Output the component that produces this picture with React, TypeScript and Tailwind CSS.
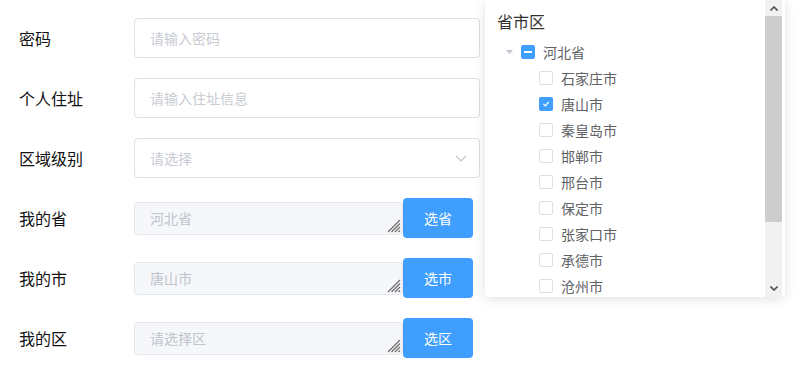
import React from "react";

const FONT = { fontFamily: '"Noto Sans CJK SC", "Noto Sans", sans-serif' };

function Hatch() {
  return (
    <svg className="absolute right-[1px] bottom-[1px]" width="14" height="14" viewBox="0 0 14 14">
      <g stroke="#6e6e6e" strokeWidth="1.3">
        <line x1="13" y1="1" x2="1" y2="13" />
        <line x1="13" y1="4.5" x2="4.5" y2="13" />
        <line x1="13" y1="8" x2="8" y2="13" />
        <line x1="13" y1="11.5" x2="11.5" y2="13" />
      </g>
    </svg>
  );
}

function Label({ children }: { children: React.ReactNode }) {
  return <div className="w-[115px] text-[16px] leading-[40px] text-[#111]">{children}</div>;
}

function Input({ placeholder, select }: { placeholder: string; select?: boolean }) {
  return (
    <div className="relative flex h-[40px] w-[346px] items-center rounded-[4px] border border-[#dcdfe6] bg-white pl-[15px] text-[14px] text-[#c8cbd2]">
      {placeholder}
      {select && (
        <svg className="absolute right-[12px] top-[16px]" width="12" height="7" viewBox="0 0 12 7">
          <path d="M1 1 L6 6 L11 1" fill="none" stroke="#c0c4cc" strokeWidth="1.1" />
        </svg>
      )}
    </div>
  );
}

function AreaRow({ label, value, btn }: { label: string; value: string; btn: string }) {
  return (
    <div className="mb-[20px] flex h-[40px] items-center">
      <Label>{label}</Label>
      <div className="relative h-[33px] w-[269px] rounded-[4px] border border-[#e4e7ed] bg-[#f5f7fa] pl-[15px] text-[14px] leading-[31px] text-[#c0c4cc]">
        {value}
        <Hatch />
      </div>
      <div className="flex h-[40px] w-[70px] items-center justify-center rounded-[4px] bg-[#409eff] text-[14px] text-white">
        {btn}
      </div>
    </div>
  );
}

function Checkbox({ state }: { state: "none" | "checked" | "half" }) {
  if (state === "none")
    return <div className="h-[14px] w-[14px] rounded-[2px] border border-[#dcdfe6] bg-white" />;
  return (
    <div className="flex h-[14px] w-[14px] items-center justify-center rounded-[2px] bg-[#409eff]">
      {state === "half" ? (
        <div className="h-[2px] w-[8px] bg-white" />
      ) : (
        <svg width="10" height="10" viewBox="0 0 10 10">
          <path d="M2.5 5 L4.3 6.8 L7.8 2.8" fill="none" stroke="#fff" strokeWidth="1.2" />
        </svg>
      )}
    </div>
  );
}

const cities: [string, boolean][] = [
  ["石家庄市", false],
  ["唐山市", true],
  ["秦皇岛市", false],
  ["邯郸市", false],
  ["邢台市", false],
  ["保定市", false],
  ["张家口市", false],
  ["承德市", false],
  ["沧州市", false],
];

export default function App() {
  return (
    <div className="relative h-[370px] w-[806px] overflow-hidden bg-white" style={FONT}>
      <div className="pl-[19px] pt-[18px]">
        <div className="mb-[20px] flex h-[40px] items-center">
          <Label>密码</Label>
          <Input placeholder="请输入密码" />
        </div>
        <div className="mb-[20px] flex h-[40px] items-center">
          <Label>个人住址</Label>
          <Input placeholder="请输入住址信息" />
        </div>
        <div className="mb-[20px] flex h-[40px] items-center">
          <Label>区域级别</Label>
          <Input placeholder="请选择" select />
        </div>
        <AreaRow label="我的省" value="河北省" btn="选省" />
        <AreaRow label="我的市" value="唐山市" btn="选市" />
        <AreaRow label="我的区" value="请选择区" btn="选区" />
      </div>

      <div className="absolute left-[485px] top-0 flex h-[297px] w-[300px] rounded-b-[4px] bg-white shadow-[0_2px_12px_0_rgba(0,0,0,0.12)]">
        <div className="flex-1 overflow-hidden">
          <div className="pl-[12px] pt-[10px] text-[16px] leading-[22px] text-[#333]">省市区</div>
          <div className="mt-[7px]">
            <div className="flex h-[26px] items-center">
              <div className="ml-[18px] flex w-[12px] justify-center">
                <svg width="7" height="4" viewBox="0 0 7 4">
                  <path d="M0 0 L7 0 L3.5 4 Z" fill="#c0c4cc" />
                </svg>
              </div>
              <div className="ml-[6px]">
                <Checkbox state="half" />
              </div>
              <span className="ml-[8px] text-[14px] text-[#606266]">河北省</span>
            </div>
            {cities.map(([c, on]) => (
              <div key={c} className="flex h-[26px] items-center pl-[54px]">
                <Checkbox state={on ? "checked" : "none"} />
                <span className="ml-[8px] text-[14px] text-[#606266]">{c}</span>
              </div>
            ))}
          </div>
        </div>
        <div className="mr-[3px] flex w-[17px] flex-col bg-[#f1f1f1]">
          <div className="flex h-[16px] items-center justify-center">
            <svg width="8" height="5" viewBox="0 0 8 5">
              <path d="M0.5 4.5 L4 1 L7.5 4.5" fill="none" stroke="#505050" strokeWidth="1.6" />
            </svg>
          </div>
          <div className="h-[206px] bg-[#cdcdcd]" />
          <div className="flex-1" />
          <div className="flex h-[17px] items-center justify-center">
            <svg width="8" height="5" viewBox="0 0 8 5">
              <path d="M0.5 0.5 L4 4 L7.5 0.5" fill="none" stroke="#505050" strokeWidth="1.6" />
            </svg>
          </div>
        </div>
      </div>
    </div>
  );
}
